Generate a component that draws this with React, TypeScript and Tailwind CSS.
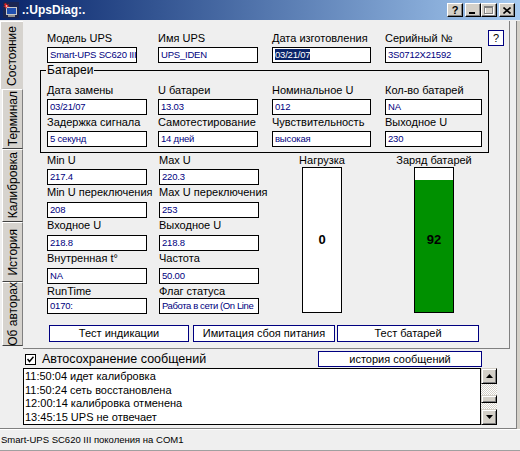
import React from 'react';

type FieldProps = {
  label: string;
  value: React.ReactNode;
  width: string;
  labelHeight?: string;
};

// label above a classic sunken edit box
const Field: React.FC<FieldProps> = ({ label, value, width, labelHeight = 'h-[16px]' }) => (
  <div className={`${width} flex flex-col`}>
    <div className={`${labelHeight} text-[11px] leading-[15px] whitespace-nowrap text-black`}>{label}</div>
    <div className="h-[16px] border border-black bg-white px-[2px] text-[9.5px] leading-[14px] tracking-[-0.2px] text-[#000080] whitespace-nowrap overflow-hidden">
      {value}
    </div>
  </div>
);

const CaptionButton: React.FC<{ className?: string; children: React.ReactNode }> = ({ className = '', children }) => (
  <div
    className={`w-[16px] h-[14px] bg-[#d4d0c8] border border-t-white border-l-white border-r-black border-b-black shadow-[inset_-1px_-1px_0_#808080] flex items-center justify-center ${className}`}
  >
    {children}
  </div>
);

const TitleIcon: React.FC = () => (
  <svg width="16" height="16" viewBox="0 0 16 16" className="ml-[3px]">
    <rect x="0" y="0" width="16" height="16" fill="#1b2550" />
    <rect x="3" y="5" width="11" height="8" fill="#c8c8c8" />
    <rect x="4" y="6" width="9" height="6" fill="#2050b0" />
    <rect x="5" y="13" width="7" height="2" fill="#909090" />
    <path d="M3 1 L4 3 L6 2 L5 4 L7 5 L4 5 L3 7 L2 5 L0 5 L2 4 L1 2 Z" fill="#e02020" />
    <circle cx="3.5" cy="4" r="0.8" fill="#ffffff" />
  </svg>
);

const Arrow: React.FC<{ up?: boolean }> = ({ up }) => (
  <svg width="7" height="4" viewBox="0 0 7 4">
    {up ? <path d="M3.5 0 L7 4 L0 4 Z" fill="#000" /> : <path d="M0 0 L7 0 L3.5 4 Z" fill="#000" />}
  </svg>
);

const ScrollButton: React.FC<{ className?: string; children?: React.ReactNode }> = ({ className = '', children }) => (
  <div
    className={`bg-[#d4d0c8] border border-t-[#d4d0c8] border-l-[#d4d0c8] border-r-black border-b-black shadow-[inset_1px_1px_0_#ffffff,inset_-1px_-1px_0_#808080] flex items-center justify-center ${className}`}
  >
    {children}
  </div>
);

const tabs = [
  { name: 'Состояние', h: 'h-[68px]', active: true },
  { name: 'Терминал', h: 'h-[60px]' },
  { name: 'Калибровка', h: 'h-[73px]' },
  { name: 'История', h: 'h-[60px]' },
  { name: 'Об авторах', h: 'h-[64px]' },
];

const messages = [
  '11:50:04 идет калибровка',
  '11:50:24 сеть восстановлена',
  '12:00:14 калибровка отменена',
  '13:45:15 UPS не отвечает',
];

const App: React.FC = () => {
  const charge = 92;

  return (
    <div className="w-[520px] h-[451px] bg-[#efefef] font-['Liberation_Sans',Arial,sans-serif] text-black overflow-hidden select-none">
      {/* Title bar */}
      <div className="h-[20px] flex items-center bg-linear-to-r from-[#0a246a] to-[#a6caf0]">
        <TitleIcon />
        <span className="ml-[3px] text-[12px] font-bold text-white leading-none">.:UpsDiag:.</span>
        <div className="ml-auto mr-[5px] flex items-center">
          <CaptionButton className="mr-[2px]">
            <span className="text-[11px] font-bold leading-none">?</span>
          </CaptionButton>
          <CaptionButton>
            <div className="w-[6px] h-[2px] bg-black self-end mb-[2px] mr-[3px]" />
          </CaptionButton>
          <CaptionButton className="mr-[2px]">
            <svg width="10" height="9" viewBox="0 0 10 9">
              <rect x="1.5" y="1.5" width="8" height="7" fill="none" stroke="#ffffff" />
              <rect x="0.5" y="0.5" width="8" height="7" fill="none" stroke="#808080" />
              <line x1="0" y1="1.5" x2="9" y2="1.5" stroke="#808080" />
            </svg>
          </CaptionButton>
          <CaptionButton>
            <svg width="8" height="7" viewBox="0 0 8 7">
              <path d="M0.5 0.5 L7.5 6.5 M7.5 0.5 L0.5 6.5" stroke="#000" strokeWidth="1.6" />
            </svg>
          </CaptionButton>
        </div>
      </div>

      {/* Body */}
      <div className="mt-px flex h-[408px]">
        <div className="w-[517px] flex flex-col border-r border-b border-[#808080]">
          <div className="flex h-[328px]">
            {/* Vertical tabs */}
            <div className="w-[23px] flex flex-col">
              {tabs.map((t) => (
                <div
                  key={t.name}
                  className={`${t.h} flex items-center justify-center bg-[#d6d3ce] border-t border-l border-white ${
                    t.active ? 'w-[23px]' : 'ml-[2px] w-[21px] border-b border-b-[#404040] border-r border-r-[#808080]'
                  }`}
                >
                  <span className="[writing-mode:vertical-rl] rotate-180 text-[12px] leading-[14px] whitespace-nowrap">
                    {t.name}
                  </span>
                </div>
              ))}
            </div>

            {/* Tab page */}
            <div className="w-[487px] h-[328px] border-r border-b border-[#808080] bg-[#efefef]">
              <div className="flex pt-[10px] pl-[24px]">
                <Field
                  label="Модель UPS"
                  width="w-[90px]"
                  value={
                    <>
                      Smart-UPS SC620 III
                      <span className="inline-block w-px h-[11px] bg-black align-middle ml-px" />
                    </>
                  }
                />
                <div className="ml-[21px]">
                  <Field label="Имя UPS" width="w-[100px]" value="UPS_IDEN" />
                </div>
                <div className="ml-[14px]">
                  <Field
                    label="Дата изготовления"
                    width="w-[99px]"
                    value={<span className="bg-[#0a246a] text-white">03/21/07</span>}
                  />
                </div>
                <div className="ml-[14px]">
                  <Field label="Серийный №" width="w-[97px]" value="3S0712X21592" />
                </div>
                <div className="ml-[6px] -mt-px w-[16px] h-[16px] border border-[#000080] bg-white flex items-center justify-center text-[11px] leading-none">
                  ?
                </div>
              </div>

              {/* Батареи group */}
              <div className="relative ml-[17px] mt-[7px] w-[449px] h-[83px] border border-black">
                <span className="absolute -top-[8px] left-[5px] px-px bg-[#efefef] text-[12px] leading-[14px]">Батареи</span>
                <div className="flex pt-[12px] pl-[6px]">
                  <div className="flex flex-col">
                    <Field label="Дата замены" width="w-[100px]" value="03/21/07" />
                    <Field label="Задержка сигнала" width="w-[100px]" value="5 секунд" />
                  </div>
                  <div className="ml-[11px] flex flex-col">
                    <Field label="U батареи" width="w-[100px]" value="13.03" />
                    <Field label="Самотестирование" width="w-[100px]" value="14 дней" />
                  </div>
                  <div className="ml-[14px] flex flex-col">
                    <Field label="Номинальное U" width="w-[99px]" value="012" />
                    <Field label="Чувствительность" width="w-[99px]" value="высокая" />
                  </div>
                  <div className="ml-[14px] flex flex-col">
                    <Field label="Кол-во батарей" width="w-[97px]" value="NA" />
                    <Field label="Выходное U" width="w-[97px]" value="230" />
                  </div>
                </div>
              </div>

              {/* Readings */}
              <div className="flex pl-[24px]">
                <div className="flex flex-col">
                  <Field label="Min U" width="w-[100px]" value="217.4" />
                  <Field label="Min U переключения" width="w-[100px]" labelHeight="h-[17px]" value="208" />
                  <Field label="Входное U" width="w-[100px]" labelHeight="h-[17px]" value="218.8" />
                  <Field label="Внутренная t°" width="w-[100px]" labelHeight="h-[17px]" value="NA" />
                  <Field label="RunTime" width="w-[100px]" labelHeight="h-[14px]" value="0170:" />
                </div>
                <div className="ml-[12px] flex flex-col">
                  <Field label="Max U" width="w-[100px]" value="220.3" />
                  <Field label="Max U переключения" width="w-[100px]" labelHeight="h-[17px]" value="253" />
                  <Field label="Выходное U" width="w-[100px]" labelHeight="h-[17px]" value="218.8" />
                  <Field label="Частота" width="w-[100px]" labelHeight="h-[17px]" value="50.00" />
                  <Field
                    label="Флаг статуса"
                    width="w-[100px]"
                    labelHeight="h-[14px]"
                    value={<span className="tracking-[-0.4px]">Работа в сети (On Line</span>}
                  />
                </div>

                <div className="ml-[23px] w-[80px] flex flex-col items-center">
                  <div className="h-[14px] text-[11px] leading-[14px]">Нагрузка</div>
                  <div className="w-[40px] h-[146px] border border-black bg-white flex items-center justify-center">
                    <span className="text-[13px] font-bold">0</span>
                  </div>
                </div>
                <div className="ml-[32px] w-[80px] flex flex-col items-center">
                  <div className="h-[14px] text-[11px] leading-[14px] whitespace-nowrap">Заряд батарей</div>
                  <div className="relative w-[40px] h-[146px] border border-black bg-white flex items-center justify-center">
                    <div className="absolute bottom-0 left-0 right-0 bg-[#009000]" style={{ height: `${charge}%` }} />
                    <span className="relative text-[13px] font-bold">{charge}</span>
                  </div>
                </div>
              </div>

              {/* Action buttons */}
              <div className="flex mt-[11px] pl-[26px]">
                <button className="w-[140px] h-[17px] border border-[#000080] bg-white text-[11px] leading-[15px]">
                  Тест индикации
                </button>
                <button className="ml-[4px] w-[142px] h-[17px] border border-[#000080] bg-white text-[11px] leading-[15px]">
                  Имитация сбоя питания
                </button>
                <button className="ml-[2px] w-[142px] h-[17px] border border-[#000080] bg-white text-[11px] leading-[15px]">
                  Тест батарей
                </button>
              </div>
            </div>
          </div>

          {/* Autosave row */}
          <div className="mt-[2px] h-[16px] flex items-center">
            <div className="ml-[25px] w-[11px] h-[11px] border border-black bg-white flex items-center justify-center">
              <svg width="7" height="7" viewBox="0 0 7 7">
                <path d="M0.5 3 L2.5 5.5 L6.5 0.8" fill="none" stroke="#000" strokeWidth="1.5" />
              </svg>
            </div>
            <span className="ml-[6px] text-[12.5px] leading-[16px]">Автосохранение сообщений</span>
            <button className="ml-auto mr-[34px] w-[164px] h-[16px] border border-[#000080] bg-white text-[11px] leading-[14px]">
              история сообщений
            </button>
          </div>

          {/* Message log */}
          <div className="mt-px ml-[23px] flex h-[57px]">
            <div className="w-[458px] h-[57px] border border-black bg-white pl-px pt-px text-[11px] leading-[13.5px] overflow-hidden">
              {messages.map((m) => (
                <div key={m} className="whitespace-nowrap">
                  {m}
                </div>
              ))}
            </div>
            <div className="w-[16px] h-[57px] flex flex-col">
              <ScrollButton className="h-[16px]">
                <Arrow up />
              </ScrollButton>
              <div className="h-[11px] bg-[image:repeating-conic-gradient(#d4d0c8_0_25%,#ffffff_0_50%)] bg-[length:2px_2px]" />
              <ScrollButton className="h-[8px]" />
              <div className="h-[6px] bg-[image:repeating-conic-gradient(#d4d0c8_0_25%,#ffffff_0_50%)] bg-[length:2px_2px]" />
              <ScrollButton className="h-[16px]">
                <Arrow />
              </ScrollButton>
            </div>
          </div>
        </div>
        <div className="w-[3px] bg-[#d4d0c8]" />
      </div>

      {/* Status bar */}
      <div className="h-[22px] border-t border-white border-b border-b-[#a0a0a0] pl-px text-[9.5px] leading-[20px] whitespace-nowrap">
        Smart-UPS SC620 III поколения на COM1
      </div>
    </div>
  );
};

export default App;
